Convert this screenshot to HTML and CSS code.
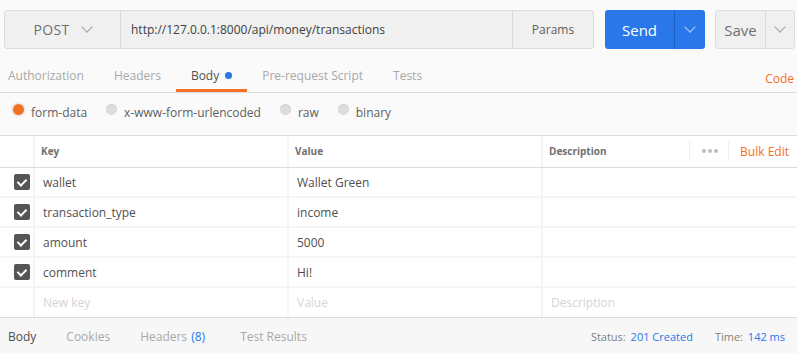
FILE: index.html
```html
<!DOCTYPE html>
<html lang="en">
<head>
  <meta charset="UTF-8">
  <title>Request Builder</title>
  <link rel="stylesheet" href="styles.css">
</head>
<body>

  <div class="url-bar">
    <div class="url-group">
      <div class="method">POST <span class="chevron"></span></div>
      <div class="url">http://127.0.0.1:8000/api/money/transactions</div>
      <div class="params">Params</div>
    </div>
    <div class="send">
      <div class="send-label">Send</div>
      <div class="send-drop"><span class="chevron light"></span></div>
    </div>
    <div class="save">
      <div class="save-label">Save</div>
      <div class="save-drop"><span class="chevron"></span></div>
    </div>
  </div>

  <div class="tabs">
    <div class="tab">Authorization</div>
    <div class="tab">Headers</div>
    <div class="tab active">Body <span class="dot"></span></div>
    <div class="tab">Pre-request Script</div>
    <div class="tab">Tests</div>
    <div class="code-link">Code</div>
  </div>

  <div class="body-types">
    <label class="radio checked"><span class="circle"></span>form-data</label>
    <label class="radio"><span class="circle"></span>x-www-form-urlencoded</label>
    <label class="radio"><span class="circle"></span>raw</label>
    <label class="radio"><span class="circle"></span>binary</label>
  </div>

  <div class="kv-table">
    <div class="kv-row head">
      <div class="cell check"></div>
      <div class="cell">Key</div>
      <div class="cell">Value</div>
      <div class="cell desc">
        <span>Description</span>
        <div class="actions">
          <span class="more"><i></i><i></i><i></i></span>
          <span class="bulk">Bulk Edit</span>
        </div>
      </div>
    </div>
    <div class="kv-row">
      <div class="cell check"><span class="box"></span></div>
      <div class="cell">wallet</div>
      <div class="cell">Wallet Green</div>
      <div class="cell"></div>
    </div>
    <div class="kv-row">
      <div class="cell check"><span class="box"></span></div>
      <div class="cell">transaction_type</div>
      <div class="cell">income</div>
      <div class="cell"></div>
    </div>
    <div class="kv-row">
      <div class="cell check"><span class="box"></span></div>
      <div class="cell">amount</div>
      <div class="cell">5000</div>
      <div class="cell"></div>
    </div>
    <div class="kv-row">
      <div class="cell check"><span class="box"></span></div>
      <div class="cell">comment</div>
      <div class="cell">Hi!</div>
      <div class="cell"></div>
    </div>
    <div class="kv-row placeholder">
      <div class="cell check"></div>
      <div class="cell">New key</div>
      <div class="cell">Value</div>
      <div class="cell">Description</div>
    </div>
  </div>

  <div class="response-bar">
    <div class="res-tab active">Body</div>
    <div class="res-tab">Cookies</div>
    <div class="res-tab wide">Headers <span class="count">(8)</span></div>
    <div class="res-tab">Test Results</div>
    <div class="meta">
      <span>Status: <em>201 Created</em></span>
      <span>Time: <em>142 ms</em></span>
    </div>
  </div>

</body>
</html>
```

FILE: styles.css
```css
body {
  font-family: "Open Sans", sans-serif;
  font-size: 12px;
  color: #505050;
  margin: 0;
  padding: 0;
  background-color: #fafafa;
  width: 797px;
  height: 353px;
  overflow: hidden;
}

.chevron {
  display: inline-block;
  width: 7px;
  height: 7px;
  border-right: 1px solid #a0a0a0;
  border-bottom: 1px solid #a0a0a0;
  transform: rotate(45deg);
  margin-top: -5px;
}

.chevron.light {
  border-color: #b8d0f5;
}

.url-bar {
  display: flex;
  padding: 10px 0 0 4px;
  height: 39px;
}

.url-group {
  display: flex;
  width: 590px;
  background-color: #f0f0f0;
  border: 1px solid #dcdcdc;
  border-radius: 3px;
  box-sizing: border-box;
}

.method {
  width: 115px;
  display: flex;
  align-items: center;
  justify-content: center;
  gap: 14px;
  font-size: 14px;
  color: #707070;
  border-right: 1px solid #dcdcdc;
  letter-spacing: 0.3px;
}

.url {
  flex: 1;
  display: flex;
  align-items: center;
  padding-left: 10px;
  font-size: 12px;
  color: #404040;
}

.params {
  width: 80px;
  display: flex;
  align-items: center;
  justify-content: center;
  border-left: 1px solid #dcdcdc;
  font-size: 12px;
  color: #606060;
}

.send {
  display: flex;
  margin-left: 11px;
  width: 100px;
  background-color: #2a77ea;
  border-radius: 3px;
  color: white;
}

.send-label {
  width: 69px;
  display: flex;
  align-items: center;
  justify-content: center;
  font-size: 15px;
  border-right: 1px solid #1c5fc4;
}

.send-drop,
.save-drop {
  flex: 1;
  display: flex;
  align-items: center;
  justify-content: center;
}

.save {
  display: flex;
  margin-left: 10px;
  width: 80px;
  background-color: #f0f0f0;
  border: 1px solid #dcdcdc;
  border-radius: 3px;
  box-sizing: border-box;
}

.save-label {
  width: 49px;
  display: flex;
  align-items: center;
  justify-content: center;
  font-size: 15px;
  color: #707070;
  border-right: 1px solid #dcdcdc;
}

.tabs {
  display: flex;
  align-items: stretch;
  height: 30px;
  margin-top: 13px;
  padding-left: 8px;
  border-bottom: 1px solid #dcdcdc;
}

.tab {
  display: flex;
  align-items: center;
  font-size: 12px;
  color: #a8a8a8;
  margin-right: 30px;
  padding: 0 0 1px;
  border-bottom: 3px solid transparent;
  box-sizing: border-box;
}

.tab.active {
  color: #505050;
  border-bottom-color: #f47023;
  margin-left: -15px;
  padding: 0 15px 1px;
  margin-right: 15px;
}

.dot {
  display: inline-block;
  width: 7px;
  height: 7px;
  border-radius: 50%;
  background-color: #2a77ea;
  margin-left: 6px;
}

.code-link {
  margin-left: auto;
  margin-right: 3px;
  display: flex;
  align-items: center;
  padding-top: 2px;
  font-size: 12px;
  color: #f47023;
}

.body-types {
  display: flex;
  align-items: center;
  height: 42px;
  padding-left: 13px;
  border-bottom: 1px solid #dcdcdc;
}

.radio {
  display: flex;
  align-items: center;
  margin-right: 19px;
  font-size: 12px;
  color: #606060;
  padding-bottom: 4px;
}

.circle {
  width: 11px;
  height: 11px;
  border-radius: 50%;
  background-color: #dcdcdc;
  margin-right: 7px;
  margin-top: -6px;
  box-shadow: inset 0 1px 1px rgba(0, 0, 0, 0.08);
}

.radio.checked .circle {
  background-color: #f47023;
  box-shadow: 0 0 0 2px #ececec;
}

.kv-table {
  background-color: white;
  border-bottom: 1px solid #dcdcdc;
}

.kv-row {
  display: grid;
  grid-template-columns: 33px 252px 252px 1fr;
  column-gap: 2px;
  height: 28px;
  border-bottom: 2px solid #f5f5f5;
  background-color: #f5f5f5;
}

.kv-row.head {
  height: 31px;
  border-bottom: 1px solid #dcdcdc;
}

.kv-row .cell {
  background-color: white;
  display: flex;
  align-items: center;
  padding-left: 8px;
  font-size: 12px;
  color: #505050;
}

.kv-row.head .cell {
  font-size: 10px;
  font-weight: bold;
  color: #707070;
  padding-left: 6px;
  padding-bottom: 1px;
}

.kv-row .cell.check {
  padding-left: 0;
  justify-content: flex-end;
  padding-right: 3px;
}

.box {
  width: 16px;
  height: 16px;
  border-radius: 2px;
  background-color: #555555;
  position: relative;
}

.box::after {
  content: "";
  position: absolute;
  left: 5px;
  top: 3px;
  width: 4px;
  height: 7px;
  border-right: 2px solid white;
  border-bottom: 2px solid white;
  transform: rotate(45deg);
}

.kv-row .cell.desc {
  justify-content: space-between;
}

.actions {
  display: flex;
  align-items: center;
  height: 20px;
}

.more {
  display: flex;
  align-items: center;
  gap: 2px;
  height: 20px;
  padding: 0 10px 0 12px;
  border-left: 1px solid #efefef;
  border-right: 1px solid #efefef;
}

.more i {
  width: 4px;
  height: 4px;
  border-radius: 50%;
  background-color: #bdbdbd;
}

.bulk {
  color: #f47023;
  font-weight: normal;
  font-size: 12px;
  padding: 0 8px 0 11px;
}

.kv-row.placeholder {
  height: 29px;
  border-bottom: none;
}

.kv-row.placeholder .cell {
  color: #d4d4d4;
}

.response-bar {
  display: flex;
  align-items: center;
  height: 36px;
  padding-left: 8px;
  background-color: #f7f7f7;
}

.res-tab {
  font-size: 12px;
  color: #a8a8a8;
  margin-right: 30px;
}

.res-tab.wide {
  margin-right: 35px;
}

.res-tab.active {
  color: #505050;
}

.count {
  color: #2a77ea;
  margin-left: 1px;
}

.meta {
  margin-left: auto;
  margin-right: 12px;
  display: flex;
  gap: 22px;
  font-size: 11px;
  color: #808080;
}

.meta em {
  font-style: normal;
  color: #2a77ea;
  margin-left: 2px;
}
```
